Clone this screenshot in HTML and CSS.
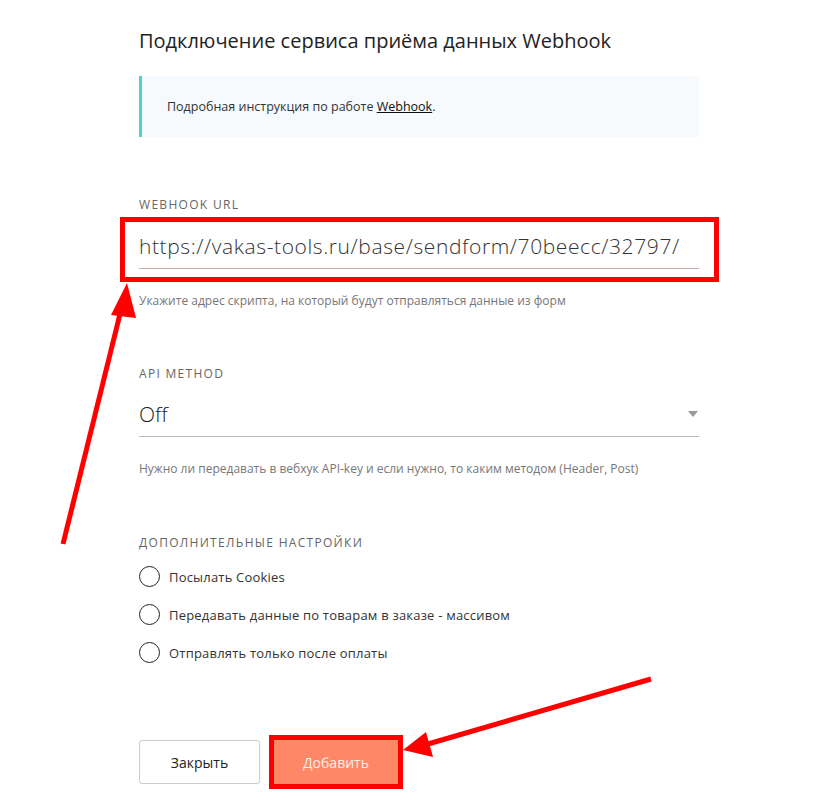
FILE: index.html
```html
<!DOCTYPE html>
<html lang="ru">
<head>
  <meta charset="UTF-8">
  <title>Webhook</title>
  <link rel="stylesheet" href="styles.css">
</head>
<body>
  <div class="modal">
    <h1 class="title">Подключение сервиса приёма данных Webhook</h1>

    <div class="notice">Подробная инструкция по работе <a href="#">Webhook</a>.</div>

    <div class="field field-url">
      <div class="label">Webhook URL</div>
      <div class="input-wrap">
        <div class="input">https://vakas-tools.ru/base/sendform/70beecc/32797/</div>
        <div class="highlight"></div>
      </div>
      <div class="hint">Укажите адрес скрипта, на который будут отправляться данные из форм</div>
    </div>

    <div class="field field-api">
      <div class="label">API method</div>
      <div class="select">
        <span>Off</span>
        <span class="caret"></span>
      </div>
      <div class="hint">Нужно ли передавать в вебхук API-key и если нужно, то каким методом (Header, Post)</div>
    </div>

    <div class="field field-extra">
      <div class="label">Дополнительные настройки</div>
      <div class="checks">
        <label class="check"><span class="circle"></span>Посылать Cookies</label>
        <label class="check"><span class="circle"></span>Передавать данные по товарам в заказе - массивом</label>
        <label class="check"><span class="circle"></span>Отправлять только после оплаты</label>
      </div>
    </div>

    <div class="actions">
      <button class="btn btn-close">Закрыть</button>
      <div class="add-wrap">
        <button class="btn btn-add">Добавить</button>
      </div>
    </div>
  </div>

  <!-- annotation arrows drawn over the form -->
  <svg class="arrows" width="833" height="804" viewBox="0 0 833 804">
    <line x1="63" y1="544" x2="121" y2="310" stroke="#ff0000" stroke-width="5"/>
    <polygon points="127,283 111,315 136,318" fill="#ff0000"/>
    <line x1="651" y1="679" x2="428" y2="744" stroke="#ff0000" stroke-width="5"/>
    <polygon points="403,750 426,732 433,757" fill="#ff0000"/>
  </svg>
</body>
</html>
```

FILE: styles.css
```css
body {
  margin: 0;
  background: #fff;
  font-family: 'Open Sans', 'Liberation Sans', sans-serif;
  color: #222;
}
.modal {
  width: 560px;
  padding: 28px 0 0 139px;
}
/* Header */
.title {
  margin: 0;
  font-size: 20px;
  line-height: 26px;
  font-weight: 400;
  color: #222;
}
/* Info block with cyan stripe */
.notice {
  margin-top: 22px;
  padding: 22px 28px 21px 25px;
  background: #f6fafd;
  border-left: 3px solid #4fcfdc;
  font-size: 12.5px;
  line-height: 18px;
  color: #333;
}
.notice a {
  color: #111;
  text-decoration: underline;
}
/* Form fields */
.field-url { margin-top: 61px; }
.field-api { margin-top: 59px; }
.field-extra { margin-top: 60px; }
.label {
  font-size: 12px;
  line-height: 14px;
  text-transform: uppercase;
  letter-spacing: 1.3px;
  color: #666;
}
.input-wrap {
  position: relative;
  margin-top: 12px;
}
.input {
  height: 44px;
  line-height: 44px;
  border-bottom: 1px solid #cfa8a8;
  font-size: 21px;
  font-weight: 300;
  letter-spacing: 0.6px;
  color: #333;
  white-space: nowrap;
  overflow: hidden;
}
/* red frame around the url field */
.highlight {
  position: absolute;
  left: -19px;
  right: -20px;
  top: -7px;
  bottom: -13px;
  border: 5px solid #ff0000;
}
.hint {
  margin-top: 25px;
  font-size: 12px;
  line-height: 14px;
  color: #777;
}
.select {
  margin-top: 10px;
  height: 45px;
  border-bottom: 1px solid #bbb;
  display: flex;
  align-items: center;
  justify-content: space-between;
  font-size: 21px;
  font-weight: 300;
  color: #222;
}
.caret {
  width: 0;
  height: 0;
  margin-right: 1px;
  border-left: 5px solid transparent;
  border-right: 5px solid transparent;
  border-top: 6px solid #999;
}
.checks {
  margin-top: 16px;
  display: flex;
  flex-direction: column;
  gap: 17px;
}
.check {
  display: flex;
  align-items: center;
  gap: 9px;
  height: 21px;
  font-size: 13px;
  letter-spacing: 0.2px;
  color: #333;
}
.circle {
  width: 19px;
  height: 19px;
  border: 1px solid #222;
  border-radius: 50%;
}
/* Buttons */
.actions {
  margin-top: 72px;
  display: flex;
  align-items: center;
  gap: 9px;
}
.btn {
  height: 44px;
  font-family: inherit;
  font-size: 14px;
  border-radius: 3px;
  cursor: pointer;
}
.btn-close {
  width: 121px;
  background: #fff;
  border: 1px solid #ccc;
  color: #222;
}
.add-wrap {
  border: 5px solid #ff0000;
}
.btn-add {
  display: block;
  width: 124px;
  border: 0;
  border-radius: 0;
  background: #fd8766;
  color: #fff0e8;
}
.arrows {
  position: absolute;
  left: 0;
  top: 0;
  pointer-events: none;
}
```
